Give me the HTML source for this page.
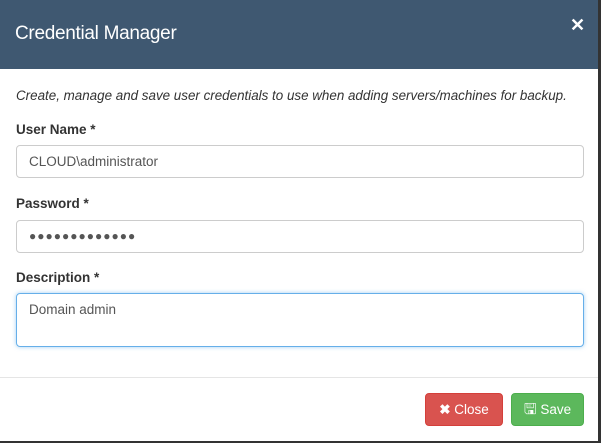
<!DOCTYPE html>
<html><head><style>
body{margin:0;width:601px;height:443px;overflow:hidden;background:#fff;font-family:"Liberation Sans",sans-serif;position:relative;}
.hdr{position:absolute;left:0;top:0;width:601px;height:69px;background:#3f5871;}
.hdr .t{position:absolute;left:15px;top:23px;color:#fff;font-size:19px;letter-spacing:-0.3px;}
.hdr .x{position:absolute;left:570px;top:15px;color:#fff;font-size:18px;font-weight:bold;}
.rb{position:absolute;right:0;top:0;width:3px;height:443px;background:#333;}
.bb{position:absolute;left:0;bottom:0;width:601px;height:2px;background:#333;}
.lbl{position:absolute;left:16px;font-size:13.5px;font-weight:bold;color:#333;}
.inp{position:absolute;left:16px;width:568px;border:1px solid #ccc;border-radius:4px;box-sizing:border-box;font-size:13.5px;color:#555;padding-left:12px;}
</style></head><body>
<div class="hdr"><div class="t">Credential Manager</div><div class="x">✕</div></div>
<div style="position:absolute;left:16px;top:88px;font-size:13.4px;font-style:italic;color:#333;">Create, manage and save user credentials to use when adding servers/machines for backup.</div>
<div class="lbl" style="top:122px">User Name *</div>
<div class="inp" style="top:145px;height:33px;line-height:31px;">CLOUD\administrator</div>
<div class="lbl" style="top:196px">Password *</div>
<div class="inp" style="top:220px;height:33px;line-height:31px;font-size:12px;letter-spacing:1px;color:#555;">●●●●●●●●●●●●●</div>
<div class="lbl" style="top:270px">Description *</div>
<div class="inp" style="top:293px;height:54px;border-color:#66afe9;box-shadow:0 0 4px rgba(102,175,233,.6);padding-top:8px;">Domain admin</div>
<div style="position:absolute;left:0;top:377px;width:598px;height:1px;background:#e5e5e5;"></div>
<div style="position:absolute;left:425px;top:393px;width:78px;height:33px;background:#d9534f;border:1px solid #d43f3a;border-radius:4px;box-sizing:border-box;color:#fff;font-size:13.5px;line-height:31px;text-align:center;"><b>✖</b> Close</div>
<div style="position:absolute;left:511px;top:393px;width:73px;height:33px;background:#5cb85c;border:1px solid #4cae4c;border-radius:4px;box-sizing:border-box;color:#fff;font-size:13.5px;line-height:31px;text-align:center;"><span style="font-size:15px">🖫</span> Save</div>
<div class="rb"></div><div class="bb"></div>
</body></html>
